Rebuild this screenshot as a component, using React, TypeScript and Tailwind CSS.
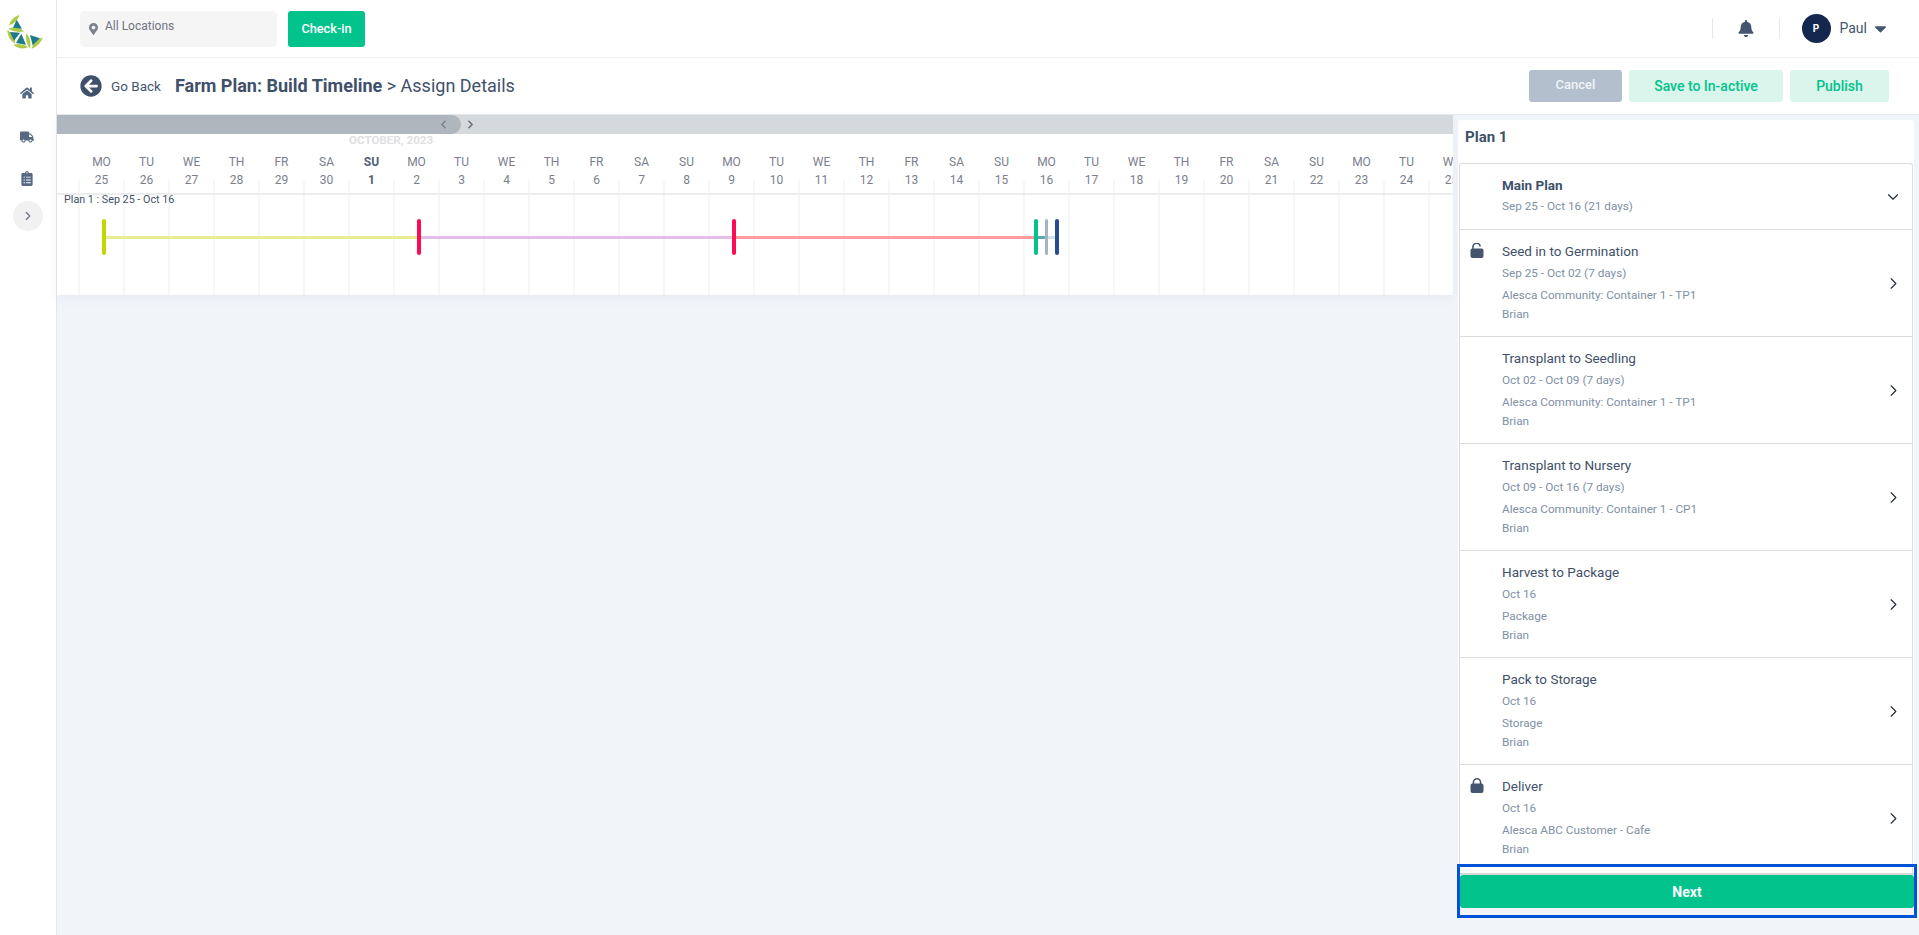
import { ChevronDown, ChevronLeft, ChevronRight } from "lucide-react";
import { FaArrowCircleLeft, FaBell, FaCaretDown, FaClipboardList, FaHome, FaMapMarkerAlt, FaTruck } from "react-icons/fa";

const names = ["MO", "TU", "WE", "TH", "FR", "SA", "SU"];
const numbers = [25, 26, 27, 28, 29, 30, 1, 2, 3, 4, 5, 6, 7, 8, 9, 10, 11, 12, 13, 14, 15, 16, 17, 18, 19, 20, 21, 22, 23, 24, 25];
const days = numbers.map((n, i) => ({ key: i, name: names[i % 7], num: n, today: i === 6 }));

const rows = [
  { title: "Seed in to Germination", date: "Sep 25 - Oct 02 (7 days)", place: "Alesca Community: Container 1 - TP1", lock: "open" },
  { title: "Transplant to Seedling", date: "Oct 02 - Oct 09 (7 days)", place: "Alesca Community: Container 1 - TP1", lock: "" },
  { title: "Transplant to Nursery", date: "Oct 09 - Oct 16 (7 days)", place: "Alesca Community: Container 1 - CP1", lock: "" },
  { title: "Harvest to Package", date: "Oct 16", place: "Package", lock: "" },
  { title: "Pack to Storage", date: "Oct 16", place: "Storage", lock: "" },
  { title: "Deliver", date: "Oct 16", place: "Alesca ABC Customer - Cafe", lock: "closed" },
];

function Logo() {
  return (
    <svg viewBox="0 0 168 168" className="w-[56px] h-[56px]">
      <g fill="#aecb45">
        <path d="M27 76 Q32 54 58 44 Q54 66 27 76Z" />
        <path d="M25 86 Q50 74 72 94 Q46 100 25 86Z" />
        <path d="M22 90 Q44 102 46 131 Q22 118 22 90Z" />
        <path d="M40 134 Q62 128 86 141 Q62 152 40 134Z" />
        <path d="M79 100 Q96 118 90 146 Q74 126 79 100Z" />
        <path d="M128 112 Q122 136 95 146 Q100 122 128 112Z" />
      </g>
      <g fill="#1d7a8a">
        <path d="M50 59 L66 86 L39 83Z" />
        <path d="M30 96 L60 98 L42 122Z" />
        <path d="M64 101 L78 134 L48 129Z" />
        <path d="M90 105 L120 115 L98 136Z" />
      </g>
    </svg>
  );
}

function OpenLock() {
  return (
    <svg viewBox="0 0 14 15" className="w-[14px] h-[15px]">
      <path d="M3 6 V4.4 A3.6 3.6 0 0 1 10.2 3.4" fill="none" stroke="#44566f" strokeWidth="1.6" />
      <rect x="0.5" y="5.5" width="13" height="9.5" rx="2" fill="#44566f" />
    </svg>
  );
}

function ClosedLock() {
  return (
    <svg viewBox="0 0 14 15" className="w-[14px] h-[15px]">
      <path d="M3.4 6 V4.4 A3.6 3.6 0 0 1 10.6 4.4 V6" fill="none" stroke="#44566f" strokeWidth="1.6" />
      <rect x="0.5" y="5.5" width="13" height="9.5" rx="2" fill="#44566f" />
    </svg>
  );
}

function Sidebar() {
  return (
    <aside className="w-[57px] h-full bg-white border-r border-[#e3e6ea] flex flex-col items-center shrink-0">
      <Logo />
      <FaHome className="mt-[30px] text-[#566a83] w-[14px] h-[14px] -ml-[2px]" />
      <FaTruck className="mt-[30px] text-[#566a83] w-[14px] h-[14px] -ml-[2px]" />
      <FaClipboardList className="mt-[27px] text-[#566a83] w-[12px] h-[15px] -ml-[2px]" />
      <div className="mt-[15px] w-[30px] h-[30px] rounded-full bg-[#f1f1f2] flex items-center justify-center text-[#6d7686]">
        <ChevronRight size={14} strokeWidth={2} />
      </div>
    </aside>
  );
}

function Header() {
  return (
    <header className="h-[58px] shrink-0 bg-white border-b border-[#eceef1] flex items-center pl-[23px] pr-[29px]">
      <div className="w-[197px] h-[36px] rounded-[5px] bg-[#f5f5f6] flex items-center pl-[9px] pb-[5px] text-[12px] text-[#6f7480]">
        <FaMapMarkerAlt className="w-[9px] h-[12px] text-[#7d818c] mr-[7px] mt-[5px]" />
        All Locations
      </div>
      <button className="ml-[11px] w-[77px] h-[36px] rounded-[3px] bg-[#02c38b] text-white text-[12.75px] font-medium">Check-in</button>
      <div className="ml-auto flex items-center">
        <div className="w-px h-[21px] bg-[#e6e8eb]" />
        <div className="w-[66px] flex justify-center"><FaBell className="w-[16px] h-[17px] text-[#44566f]" /></div>
        <div className="w-px h-[21px] bg-[#e6e8eb]" />
        <div className="ml-[22px] w-[29px] h-[29px] rounded-full bg-[#14284f] text-white text-[10px] font-bold flex items-center justify-center">P</div>
        <span className="ml-[9px] text-[14px] text-[#44566f]">Paul</span>
        <FaCaretDown className="ml-[4px] w-[19px] h-[19px] text-[#44566f]" />
      </div>
    </header>
  );
}

function Toolbar() {
  return (
    <div className="h-[57px] shrink-0 bg-white border-b border-[#e6e9ed] flex items-center pl-[23px] pr-[30px]">
      <FaArrowCircleLeft className="w-[22px] h-[22px] text-[#3f516a]" />
      <span className="ml-[9px] text-[13.5px] text-[#44566f]">Go Back</span>
      <h1 className="ml-[14px] pb-[2px] text-[18px] text-[#3f516a]"><span className="font-bold">Farm Plan: Build Timeline</span> &gt; Assign Details</h1>
      <div className="ml-auto flex gap-[7px]">
        <button className="w-[93px] h-[32px] rounded-[3px] bg-[#b3bfcd] text-[#f0f3f6] text-[13px] font-medium pb-[3px]">Cancel</button>
        <button className="w-[154px] h-[32px] rounded-[3px] bg-[#d9f5ec] text-[#02c38b] text-[14px] font-medium">Save to In-active</button>
        <button className="w-[99px] h-[32px] rounded-[3px] bg-[#d9f5ec] text-[#02c38b] text-[14px] font-medium">Publish</button>
      </div>
    </div>
  );
}

function Timeline() {
  return (
    <section className="w-[1396px] h-[180px] shrink-0 bg-white flex flex-col overflow-hidden shadow-[0_4px_10px_rgba(60,80,110,0.06)]">
      <div className="h-[19px] shrink-0 bg-[#d5d9dc] flex items-center">
        <div className="w-[404px] h-full bg-[#b0b6bd] rounded-r-full flex items-center justify-end pr-[11px] text-[#7d838c]">
          <ChevronLeft size={13} strokeWidth={3} />
        </div>
        <ChevronRight size={13} strokeWidth={3} className="ml-[3px] text-[#6a717b]" />
      </div>
      <div className="-mt-px h-[14px] shrink-0 pl-[292px] text-[11.6px] leading-[14px] font-bold text-[#dfe0e2]">OCTOBER, 2023</div>
      <div className="mt-[6px] h-[18px] shrink-0 flex pl-[22px]">
        {days.map((d) => (
          <div key={d.key} className={`w-[45px] shrink-0 text-center text-[12px] leading-[18px] ${d.today ? "font-bold text-[#4f5f76]" : "text-[#7b7e8d]"}`}>{d.name}</div>
        ))}
      </div>
      <div className="h-[24px] shrink-0 flex pl-[22px] border-b-2 border-[#eceded]">
        {days.map((d) => (
          <div key={d.key} className={`relative w-[45px] shrink-0 text-center text-[12px] leading-[18px] ${d.today ? "font-bold text-[#4f5f76]" : "text-[#7b7e8d]"}`}>
            <span className="absolute -left-px top-[9px] bottom-0 w-[2px] bg-[#f7f7f8]" />
            {d.num}
          </div>
        ))}
      </div>
      <div className="relative flex-1 flex pl-[21px]">
        {days.map((d) => (
          <div key={d.key} className="w-[45px] shrink-0 border-l-2 border-[#f7f7f8]" />
        ))}
        <span className="absolute left-[7px] -top-[2px] text-[10.75px] leading-[14px] text-[#3f516a]">Plan 1 : Sep 25 - Oct 16</span>
        <span className="absolute left-[47px] top-[41px] w-[315px] h-[3px] bg-[#e8ee8f]" />
        <span className="absolute left-[362px] top-[41px] w-[315px] h-[3px] bg-[#e4bde8]" />
        <span className="absolute left-[677px] top-[41px] w-[300px] h-[3px] bg-[#ff9ba0]" />
        <span className="absolute left-[977px] top-[41px] w-[11px] h-[3px] bg-[#5aa9b3]" />
        <span className="absolute left-[988px] top-[41px] w-[10px] h-[3px] bg-[#d0e2e4]" />
        <span className="absolute left-[45px] top-[24px] w-[4px] h-[36px] rounded-[2px] bg-[#c6d400]" />
        <span className="absolute left-[360px] top-[24px] w-[4px] h-[36px] rounded-[2px] bg-[#ff0a54]" />
        <span className="absolute left-[675px] top-[24px] w-[4px] h-[36px] rounded-[2px] bg-[#ff0a54]" />
        <span className="absolute left-[977px] top-[24px] w-[4px] h-[36px] rounded-[2px] bg-[#02c38b]" />
        <span className="absolute left-[988px] top-[24px] w-[3px] h-[36px] rounded-[2px] bg-[#a6b3c2]" />
        <span className="absolute left-[998px] top-[24px] w-[4px] h-[36px] rounded-[2px] bg-[#274b93]" />
      </div>
    </section>
  );
}

function Panel() {
  return (
    <section className="relative w-[456px] h-[788px] mt-[5px] ml-[5px] shrink-0 bg-white rounded-[3px] flex flex-col">
      <div className="h-[43px] shrink-0 pl-[7px] pt-[7px] text-[15px] leading-[20px] font-bold text-[#3f516a]">Plan 1</div>
      <div className="mx-px flex-1 border-x border-t border-[#dcdcdc] rounded-t-[3px] flex flex-col overflow-hidden">
        <div className="h-[66px] shrink-0 border-b border-[#dcdcdc] flex items-center pl-[42px] pr-[10px]">
          <div className="flex-1 pb-[3px]">
            <div className="text-[13.5px] leading-[20px] font-bold text-[#3f516a]">Main Plan</div>
            <div className="text-[11.75px] leading-[20px] mt-px text-[#8090a5]">Sep 25 - Oct 16 (21 days)</div>
          </div>
          <ChevronDown size={18} strokeWidth={1.5} className="text-[#1f2937]" />
        </div>
        {rows.map((r, i) => (
          <div key={r.title} className={`h-[107px] shrink-0 flex items-center pr-[9px] ${i < rows.length - 1 ? "border-b border-[#dcdcdc]" : ""}`}>
            <div className="w-[42px] self-start shrink-0 pt-[13px] pl-[10px]">
              {r.lock === "open" && <OpenLock />}
              {r.lock === "closed" && <ClosedLock />}
            </div>
            <div className="flex-1 self-start pt-[11px]">
              <div className="text-[13.5px] leading-[20px] text-[#3f516a]">{r.title}</div>
              <div className="text-[11.75px] leading-[20px] mt-[2px] text-[#8090a5]">{r.date}</div>
              <div className="text-[11.75px] leading-[20px] mt-[2px] text-[#8090a5]">{r.place}</div>
              <div className="text-[11.75px] leading-[20px] -mt-px text-[#8090a5]">Brian</div>
            </div>
            <ChevronRight size={19} strokeWidth={1.4} className="text-[#1f2937]" />
          </div>
        ))}
      </div>
      <div className="h-[2px] shrink-0 ml-[2px] bg-[#d8d8d8]" />
      <button className="h-[33px] shrink-0 ml-[2px] pt-[2px] rounded-[3px] bg-[#02c38b] text-white text-[14px] font-bold">Next</button>
      <div className="absolute -left-[1px] right-[-3px] top-[744px] h-[54px] border-[3px] border-[#0052d9] pointer-events-none" />
    </section>
  );
}

export default function App() {
  return (
    <div className="w-[1919px] h-[935px] overflow-hidden flex bg-[#f1f5fa] font-['Roboto',sans-serif]">
      <Sidebar />
      <main className="flex-1 min-w-0 flex flex-col">
        <Header />
        <Toolbar />
        <div className="flex-1 flex items-start min-h-0">
          <Timeline />
          <Panel />
        </div>
      </main>
    </div>
  );
}
